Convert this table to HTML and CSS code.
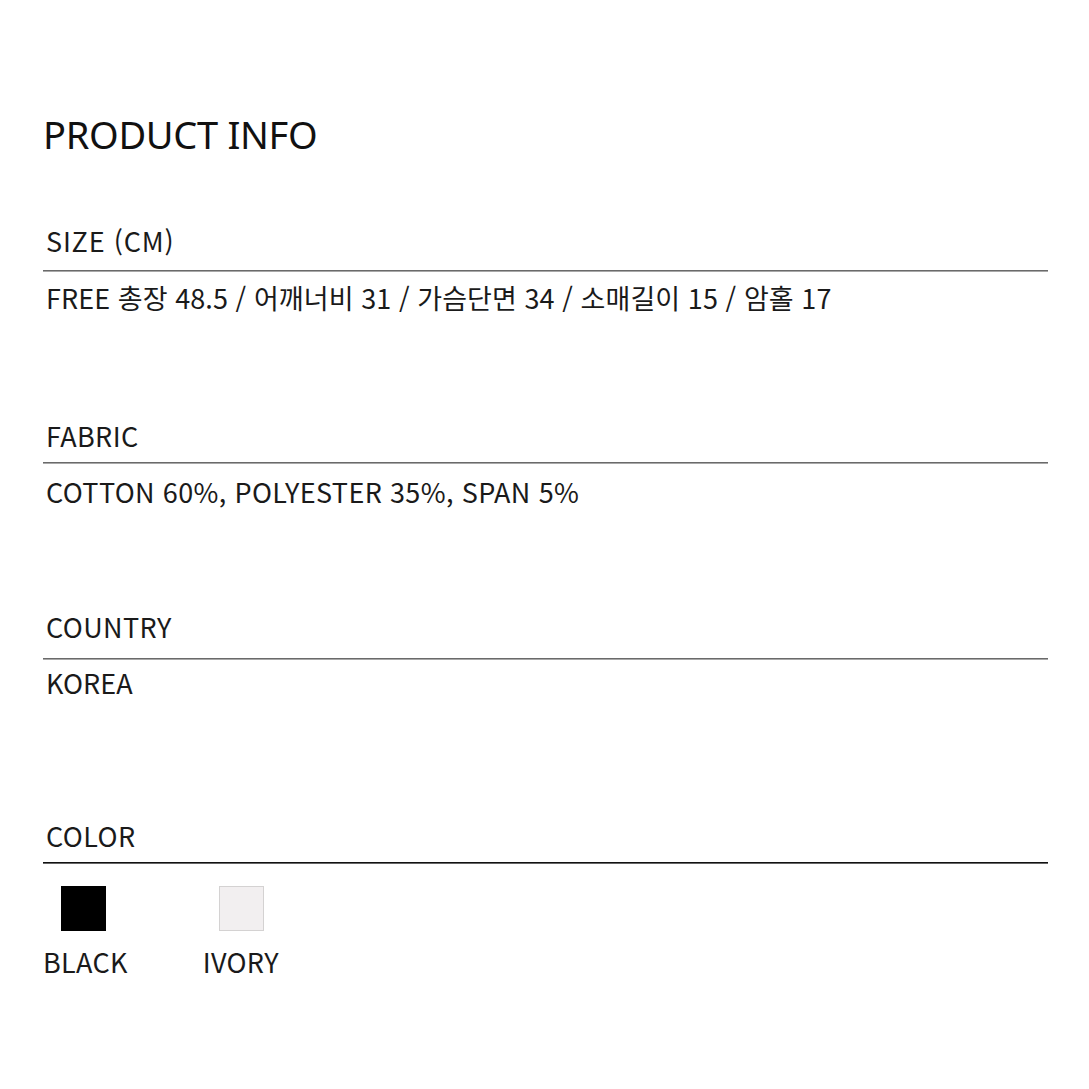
FILE: index.html
```html
<!DOCTYPE html>
<html lang="ko">
<head>
<meta charset="utf-8">
<link rel="stylesheet" href="styles.css">
</head>
<body>
<main class="page">
  <h1 class="title">PRODUCT INFO</h1>
  <section class="sec sec-size">
    <div class="label">SIZE (CM)</div>
    <div class="rule"></div>
    <div class="value">FREE 총장 48.5 / 어깨너비 31 / 가슴단면 34 / 소매길이 15 / 암홀 17</div>
  </section>
  <section class="sec sec-fabric">
    <div class="label">FABRIC</div>
    <div class="rule"></div>
    <div class="value">COTTON 60%, POLYESTER 35%, SPAN 5%</div>
  </section>
  <section class="sec sec-country">
    <div class="label">COUNTRY</div>
    <div class="rule"></div>
    <div class="value">KOREA</div>
  </section>
  <section class="sec sec-color">
    <div class="label">COLOR</div>
    <div class="rule rule-dark"></div>
    <div class="swatches">
      <div class="swatch">
        <div class="chip chip-black"></div>
        <div class="chip-name">BLACK</div>
      </div>
      <div class="swatch">
        <div class="chip chip-ivory"></div>
        <div class="chip-name">IVORY</div>
      </div>
    </div>
  </section>
</main>
</body>
</html>
```
FILE: styles.css
```css
html, body {
  margin: 0;
  padding: 0;
  background: #ffffff;
}
body {
  font-family: "Noto Sans CJK KR", "Noto Sans", sans-serif;
  color: #111111;
}
.page {
  width: 1005px;
  padding: 108px 0 0 43px;
  display: flex;
  flex-direction: column;
}
.title {
  margin: 0;
  font-family: "Noto Sans", "Noto Sans CJK KR", sans-serif;
  font-weight: 400;
  font-size: 38px;
  line-height: 52px;
  letter-spacing: -0.3px;
  color: #111;
}
.sec {
  display: flex;
  flex-direction: column;
}
.label, .value, .chip-name {
  font-size: 27px;
  line-height: 36px;
  padding-left: 3px;
  color: #1a1a1a;
  white-space: nowrap;
}
.label {
  letter-spacing: 0.4px;
}
.sec-size .label {
  letter-spacing: 0.8px;
}
.value {
  letter-spacing: 0.07px;
}
.sec-fabric .value {
  letter-spacing: 0.35px;
}
.rule {
  height: 1px;
  background: #6a6a6a;
  border-bottom: 1px solid #a8a8a8;
}
.rule-dark {
  background: #111;
  border-bottom-color: #666;
}
.sec-size { margin-top: 63px; }
.sec-size .rule { margin-top: 11px; }
.sec-size .value { margin-top: 8px; }
.sec-fabric { margin-top: 102px; }
.sec-fabric .rule { margin-top: 8px; }
.sec-fabric .value { margin-top: 10px; }
.sec-country { margin-top: 99px; }
.sec-country .rule { margin-top: 13px; }
.sec-country .value { margin-top: 5px; }
.sec-color { margin-top: 117px; }
.sec-color .rule { margin-top: 8px; }
.swatches {
  display: flex;
  gap: 75px;
  margin-top: 22px;
}
.swatch {
  display: flex;
  flex-direction: column;
  align-items: center;
  gap: 13px;
}
.chip {
  width: 45px;
  height: 45px;
  box-sizing: border-box;
}
.chip-black {
  background: #000;
  margin-right: 4px;
}
.chip-ivory {
  background: #f2eff0;
  border: 1px solid #d4d2d2;
  margin-left: 2px;
}
.swatch .chip-name {
  padding-left: 0;
  letter-spacing: 0.3px;
}
```
